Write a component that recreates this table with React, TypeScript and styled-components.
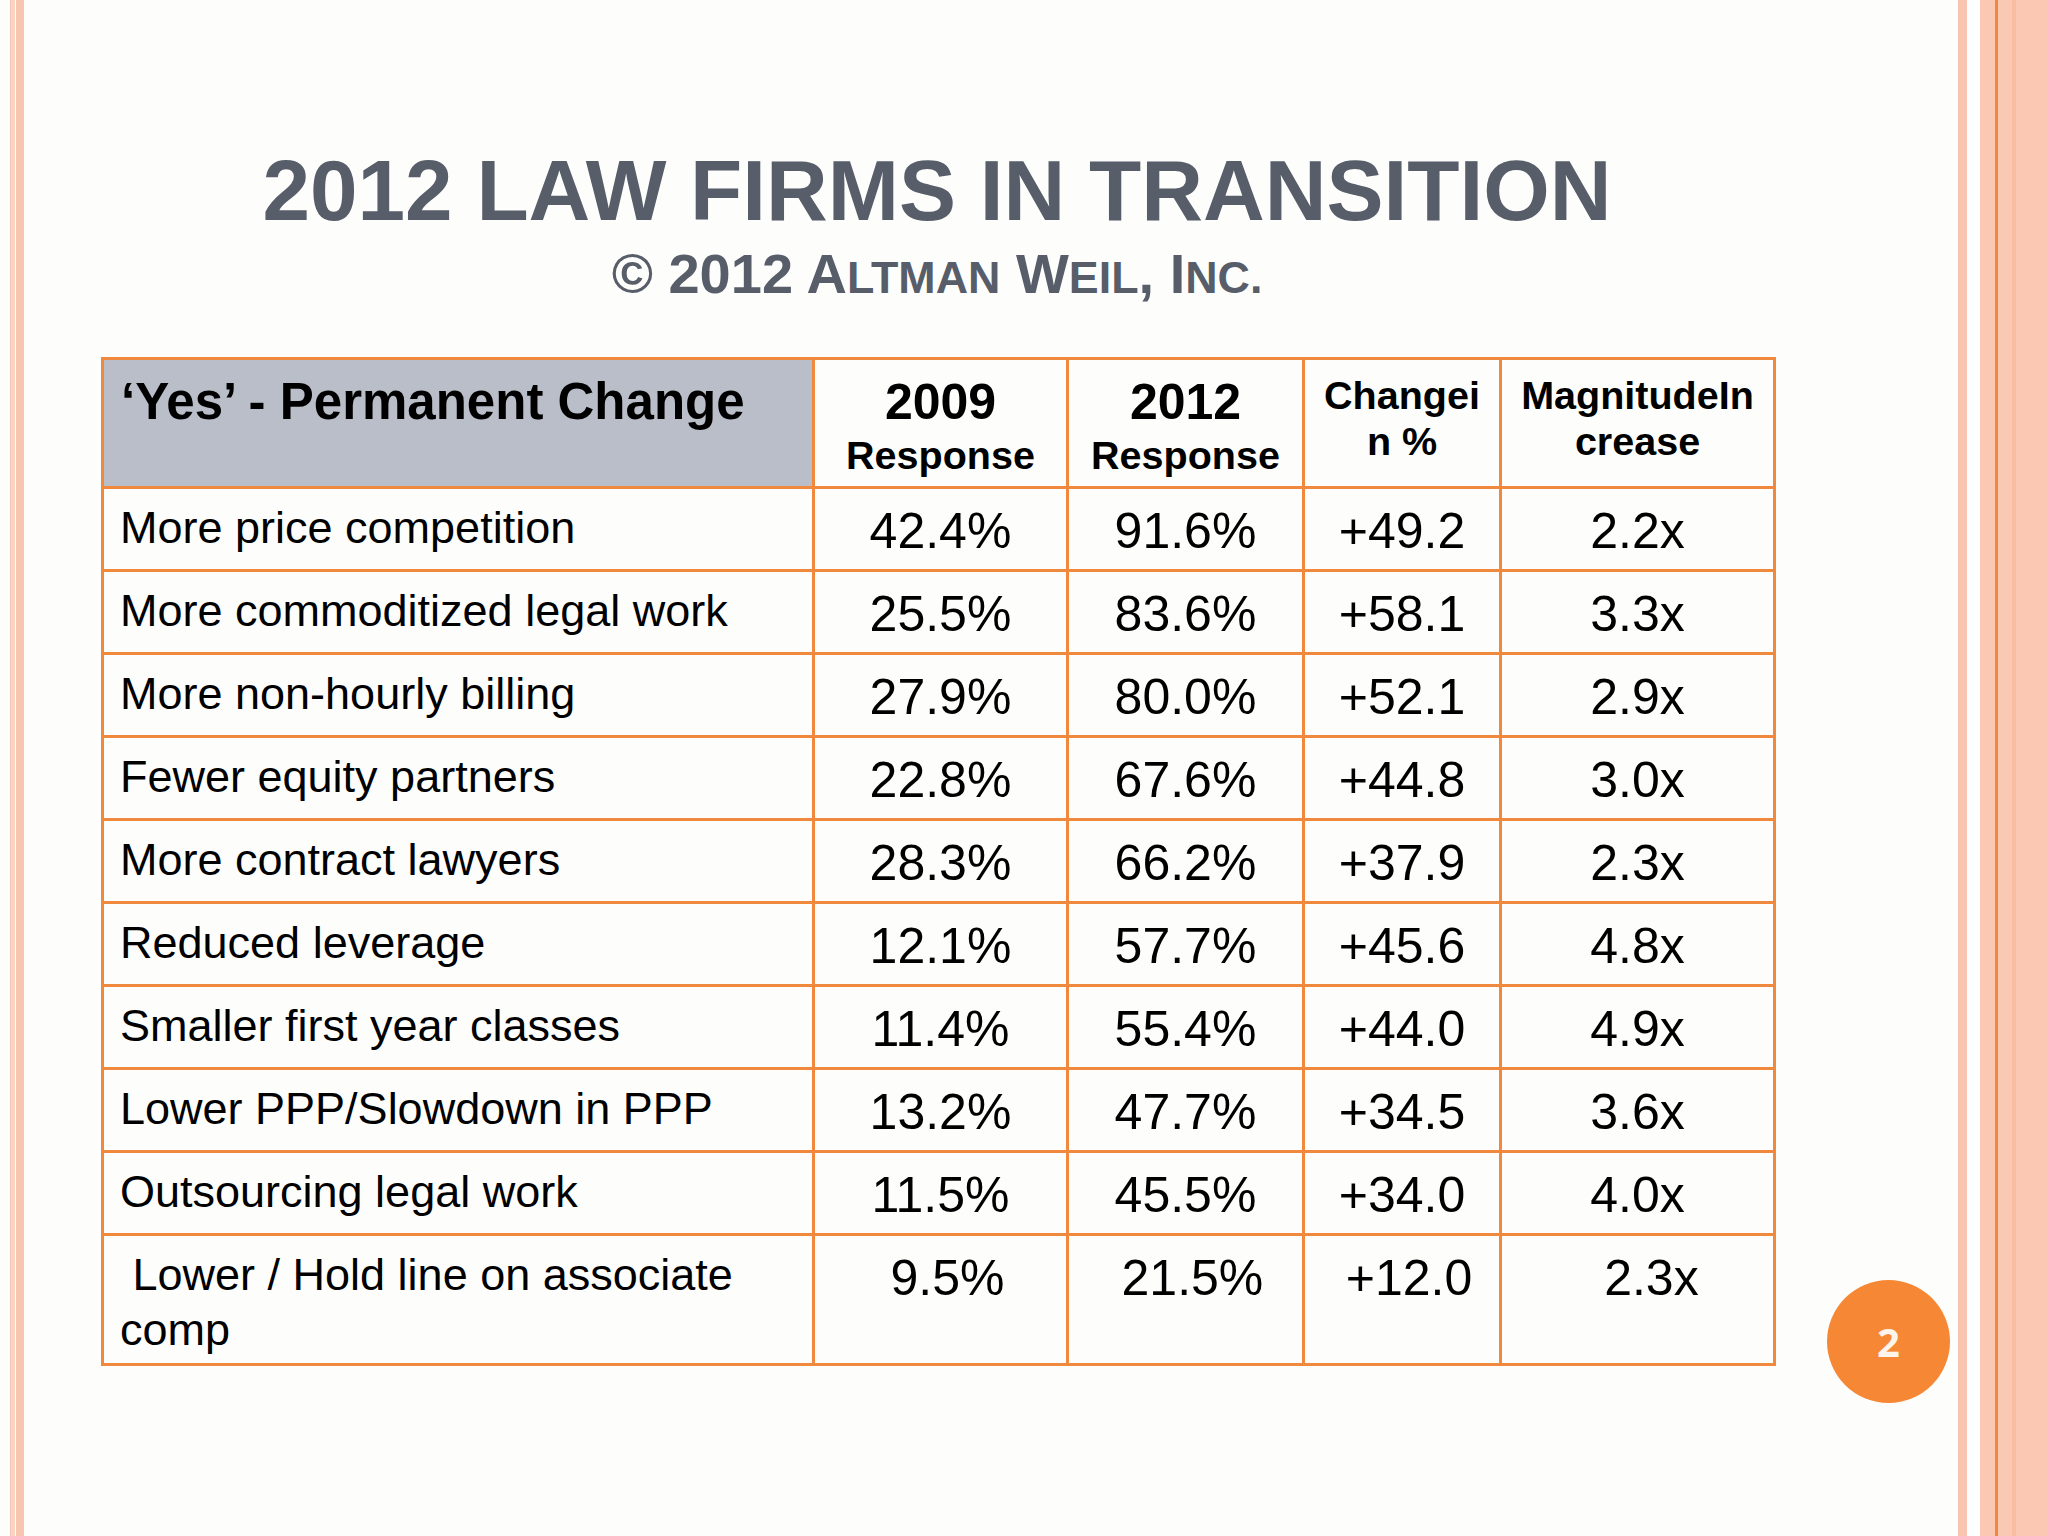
import React from "react";
import styled, { createGlobalStyle } from "styled-components";

const GlobalStyle = createGlobalStyle`
  html, body {
    margin: 0;
    padding: 0;
    background: #fdfefc;
  }
  body {
    font-family: "Liberation Sans", Arial, sans-serif;
  }
`;

const ORANGE = "#f0893d";

const Slide = styled.div`
  position: relative;
  width: 2048px;
  height: 1536px;
  display: flex;
  overflow: hidden;
  background: #fdfefc;
`;

const LeftRail = styled.div`
  width: 24px;
  flex-shrink: 0;
  background: linear-gradient(
    to right,
    #fdfefc 0px,
    #fdfefc 10px,
    #f3c8b6 10px,
    #f3c8b6 11px,
    #f9d4c3 11px,
    #f9d4c3 15px,
    #fdfefc 15px,
    #fdfefc 16px,
    #f8c5ae 16px,
    #f8c5ae 24px
  );
`;

const RightRail = styled.div`
  width: 90px;
  flex-shrink: 0;
  background: linear-gradient(
    to right,
    #f9c5b0 0px,
    #f9c5b0 9px,
    #fefefe 9px,
    #fefefe 22px,
    #fac8b3 22px,
    #fac8b3 37.5px,
    #f0883a 37.5px,
    #f0883a 40px,
    #fac9b4 40px,
    #fac9b4 54px,
    #f9bda4 54px,
    #f9bda4 58px,
    #fbc8b4 58px,
    #fbc8b4 90px
  );
`;

const Main = styled.main`
  flex: 1;
  padding-left: 77px;
  display: flex;
  flex-direction: column;
`;

const Heading = styled.header`
  width: 1672px;
  display: flex;
  flex-direction: column;
  align-items: center;
  color: #575d69;
  font-weight: 700;
`;

const Title = styled.h1`
  margin: 142px 0 0;
  font-size: 85.5px;
  line-height: 1.15;
  font-weight: 700;
  white-space: nowrap;
`;

const Subtitle = styled.h2`
  margin: 2px 0 0;
  font-size: 56px;
  line-height: 1.15;
  font-weight: 700;
  white-space: nowrap;
`;

const Small = styled.span`
  font-size: 0.8em;
`;

const Table = styled.table`
  margin-top: 50px;
  width: 1672px;
  table-layout: fixed;
  border-collapse: collapse;
  border: 3px solid ${ORANGE};
  color: #000;
`;

const HeadRow = styled.tr`
  height: 129px;
`;

const BodyRow = styled.tr<{ $tall?: boolean }>`
  height: ${(p) => (p.$tall ? 130 : 83)}px;
`;

const HeadCell = styled.th<{ $label?: boolean }>`
  border: 3px solid ${ORANGE};
  vertical-align: top;
  padding: 12px 4px 0 ${(p) => (p.$label ? 17 : 4)}px;
  text-align: ${(p) => (p.$label ? "left" : "center")};
  background: ${(p) => (p.$label ? "#b9bec8" : "#fdfefc")};
  font-weight: 700;
`;

const BigLine = styled.span<{ $wide?: boolean }>`
  display: block;
  font-size: ${(p) => (p.$wide ? 51 : 50)}px;
  line-height: 60px;
  white-space: nowrap;
`;

const SmallLine = styled.span`
  display: block;
  font-size: 39.5px;
  line-height: 46px;
  white-space: nowrap;
`;

const LabelCell = styled.td`
  border: 3px solid ${ORANGE};
  vertical-align: top;
  padding: 11.5px 10px 0 16px;
  font-size: 45px;
  line-height: 55px;
  background: #fdfefc;
`;

const NumCell = styled.td`
  border: 3px solid ${ORANGE};
  vertical-align: top;
  padding: 12px 0 0;
  text-align: center;
  font-size: 50px;
  line-height: 60px;
  white-space: nowrap;
  background: #fdfefc;
`;

const PageBadge = styled.div`
  position: absolute;
  left: 1827px;
  top: 1280px;
  width: 123px;
  height: 123px;
  border-radius: 50%;
  background: #f68735;
  color: #fdf4ec;
  display: flex;
  align-items: center;
  justify-content: center;
  font-size: 40px;
  font-weight: 700;
  font-family: "Open Sans", "Liberation Sans", Arial, sans-serif;
`;

type Row = [string, string, string, string, string];

const rows: Row[] = [
  ["More price competition", "42.4%", "91.6%", "+49.2", "2.2x"],
  ["More commoditized legal work", "25.5%", "83.6%", "+58.1", "3.3x"],
  ["More non-hourly billing", "27.9%", "80.0%", "+52.1", "2.9x"],
  ["Fewer equity partners", "22.8%", "67.6%", "+44.8", "3.0x"],
  ["More contract lawyers", "28.3%", "66.2%", "+37.9", "2.3x"],
  ["Reduced leverage", "12.1%", "57.7%", "+45.6", "4.8x"],
  ["Smaller first year classes", "11.4%", "55.4%", "+44.0", "4.9x"],
  ["Lower PPP/Slowdown in PPP", "13.2%", "47.7%", "+34.5", "3.6x"],
  ["Outsourcing legal work", "11.5%", "45.5%", "+34.0", "4.0x"],
  [
    "\u00a0Lower / Hold line on associate comp",
    "\u00a09.5%",
    "\u00a021.5%",
    "\u00a0+12.0",
    "\u00a0\u00a02.3x",
  ],
];

export default function App() {
  return (
    <>
      <GlobalStyle />
      <Slide>
        <LeftRail />
        <Main>
          <Heading>
            <Title>2012 LAW FIRMS IN TRANSITION</Title>
            <Subtitle>
              © 2012 A<Small>LTMAN</Small> W<Small>EIL</Small>, I
              <Small>NC.</Small>
            </Subtitle>
          </Heading>
          <Table>
            <colgroup>
              <col style={{ width: 711 }} />
              <col style={{ width: 254 }} />
              <col style={{ width: 236 }} />
              <col style={{ width: 197 }} />
              <col style={{ width: 274 }} />
            </colgroup>
            <thead>
              <HeadRow>
                <HeadCell $label>
                  <BigLine $wide>‘Yes’ - Permanent Change</BigLine>
                </HeadCell>
                <HeadCell>
                  <BigLine>2009</BigLine>
                  <SmallLine>Response</SmallLine>
                </HeadCell>
                <HeadCell>
                  <BigLine>2012</BigLine>
                  <SmallLine>Response</SmallLine>
                </HeadCell>
                <HeadCell>
                  <SmallLine>Changei</SmallLine>
                  <SmallLine>n %</SmallLine>
                </HeadCell>
                <HeadCell>
                  <SmallLine>MagnitudeIn</SmallLine>
                  <SmallLine>crease</SmallLine>
                </HeadCell>
              </HeadRow>
            </thead>
            <tbody>
              {rows.map((r, i) => (
                <BodyRow key={i} $tall={i === rows.length - 1}>
                  <LabelCell>{r[0]}</LabelCell>
                  <NumCell>{r[1]}</NumCell>
                  <NumCell>{r[2]}</NumCell>
                  <NumCell>{r[3]}</NumCell>
                  <NumCell>{r[4]}</NumCell>
                </BodyRow>
              ))}
            </tbody>
          </Table>
        </Main>
        <RightRail />
        <PageBadge>2</PageBadge>
      </Slide>
    </>
  );
}
